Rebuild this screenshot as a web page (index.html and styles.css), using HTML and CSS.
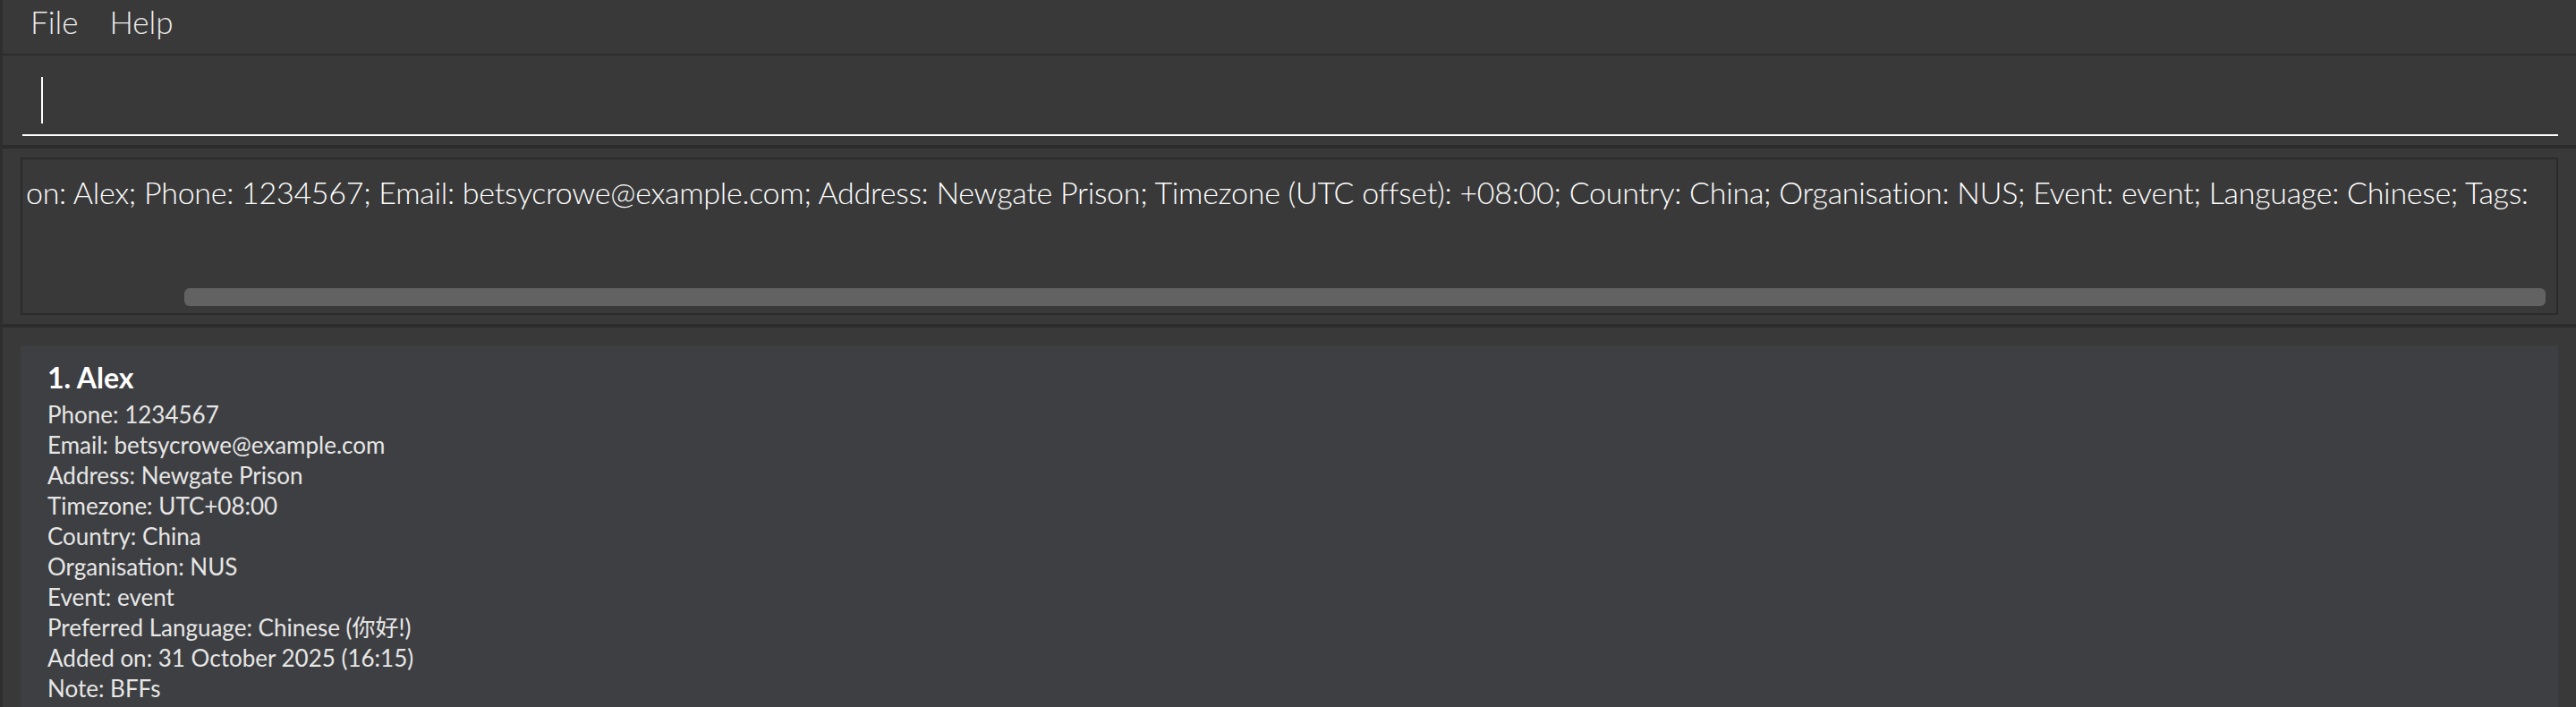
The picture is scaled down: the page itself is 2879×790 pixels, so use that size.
FILE: index.html
```html
<!DOCTYPE html>
<html lang="en">
<head>
<meta charset="utf-8">
<title>Address Book</title>
<link rel="stylesheet" href="styles.css">
</head>
<body>
<div class="app">
  <div class="menubar">
    <span class="menu-item">File</span>
    <span class="menu-item">Help</span>
  </div>
  <div class="cmd">
    <div class="cmd-field"><span class="caret"></span></div>
  </div>
  <div class="result">
    <div class="result-box">
      <div class="result-text">on: Alex; Phone: 1234567; Email: betsycrowe@example.com; Address: Newgate Prison; Timezone (UTC offset): +08:00; Country: China; Organisation: NUS; Event: event; Language: Chinese; Tags:</div>
      <div class="hscroll"><div class="thumb"></div></div>
    </div>
  </div>
  <div class="list">
    <div class="card">
      <div class="card-title">1. Alex</div>
      <div class="card-line">Phone: 1234567</div>
      <div class="card-line">Email: betsycrowe@example.com</div>
      <div class="card-line">Address: Newgate Prison</div>
      <div class="card-line">Timezone: UTC+08:00</div>
      <div class="card-line">Country: China</div>
      <div class="card-line">Organisation: NUS</div>
      <div class="card-line">Event: event</div>
      <div class="card-line">Preferred Language: Chinese (你好!)</div>
      <div class="card-line">Added on: 31 October 2025 (16:15)</div>
      <div class="card-line">Note: BFFs</div>
    </div>
  </div>
</div>
</body>
</html>
```

FILE: styles.css
```css
html, body {
  margin: 0;
  padding: 0;
  background: #393939;
  overflow: hidden;
}

.app {
  width: 2879px;
  height: 790px;
  box-sizing: border-box;
  border-left: 3px solid #2e2e2e;
  background: #393939;
  font-family: "Lato", "Noto Sans CJK SC", sans-serif;
  overflow: hidden;
}

.menubar {
  height: 60px;
  display: flex;
  align-items: flex-start;
  gap: 35px;
  padding-left: 31px;
  border-bottom: 2px solid #2c2c2c;
  line-height: 49px;
}

.menu-item {
  font-size: 35px;
  font-weight: 300;
  color: #ececec;
}

.cmd {
  height: 104px;
  box-sizing: border-box;
  padding: 24px 20px 10px 22px;
  border-bottom: 4px solid #2c2c2c;
}

.cmd-field {
  height: 64px;
  border-bottom: 2px solid #ffffff;
  display: flex;
  align-items: flex-end;
  padding-left: 21px;
}

.caret {
  width: 2px;
  height: 52px;
  margin-bottom: 12px;
  background: #ffffff;
}

.result {
  height: 200px;
  box-sizing: border-box;
  padding: 10px 20px 10px 20px;
  border-bottom: 4px solid #2c2c2c;
}

.result-box {
  height: 100%;
  box-sizing: border-box;
  border: 2px solid #2b2b2b;
  display: flex;
  flex-direction: column;
  justify-content: space-between;
  overflow: hidden;
}

.result-text {
  padding: 17px 0 0 4px;
  font-size: 34px;
  line-height: 40px;
  font-weight: 300;
  letter-spacing: -0.28px;
  color: #ffffff;
  white-space: nowrap;
}

.hscroll {
  height: 20px;
  padding: 0 12px 8px 181px;
}

.thumb {
  height: 20px;
  border-radius: 6px;
  background: #626262;
}

.list {
  padding: 20px 20px 0 20px;
}

.card {
  background: #3e3f42;
  height: 420px;
  padding: 11px 30px 0 30px;
  box-sizing: border-box;
}

.card-title {
  font-size: 32px;
  line-height: 49px;
  font-weight: 700;
  color: #ffffff;
}

.card-line {
  font-size: 26px;
  line-height: 34px;
  color: #e6e6e6;
}
```
